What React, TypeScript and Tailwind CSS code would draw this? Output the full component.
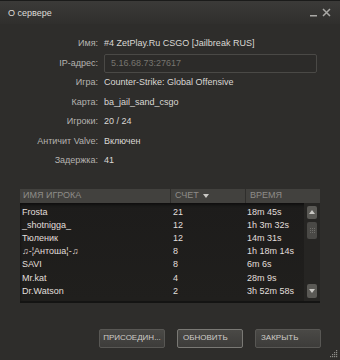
const INFO: { label: string; value: string; input?: boolean }[] = [
  { label: "Имя:", value: "#4 ZetPlay.Ru CSGO [Jailbreak RUS]" },
  { label: "IP-адрес:", value: "5.16.68.73:27617", input: true },
  { label: "Игра:", value: "Counter-Strike: Global Offensive" },
  { label: "Карта:", value: "ba_jail_sand_csgo" },
  { label: "Игроки:", value: "20 / 24" },
  { label: "Античит Valve:", value: "Включен" },
  { label: "Задержка:", value: "41" },
];

const PLAYERS: [string, string, string][] = [
  ["Frosta", "21", "18m 45s"],
  ["_shotnigga_", "12", "1h 3m 32s"],
  ["Тюленик", "12", "14m 31s"],
  ["♫-¦Антоша¦-♫", "8", "1h 18m 14s"],
  ["SAVI", "8", "6m 6s"],
  ["Mr.kat", "4", "28m 9s"],
  ["Dr.Watson", "2", "3h 52m 58s"],
];

function Arrow({ down }: { down?: boolean }) {
  return (
    <svg width="6" height="4" viewBox="0 0 6 4" aria-hidden="true">
      {down ? <polygon points="0,0 6,0 3,4" fill="#c9c8c4" /> : <polygon points="0,4 6,4 3,0" fill="#c9c8c4" />}
    </svg>
  );
}

export default function App() {
  return (
    <div
      className="w-[340px] h-[360px] flex flex-col bg-[#2e2d2b] border-t border-[#1b1b1a] text-[9px] leading-none"
      style={{ fontFamily: '"Liberation Sans", Arial, sans-serif' }}
    >
      {/* Title bar */}
      <div className="h-[23px] shrink-0 flex items-center justify-between pl-[8px] pr-[9px] bg-gradient-to-b from-[#3b3a38] to-[#302f2d]">
        <span className="text-[#dedcd8] mt-[1px]">О сервере</span>
        <div className="flex items-center gap-[5px]">
          <svg width="7" height="9" viewBox="0 0 7 9" aria-hidden="true">
            <rect x="0" y="7" width="7" height="1.5" fill="#a9a8a5" />
          </svg>
          <svg width="9" height="9" viewBox="0 0 9 9" aria-hidden="true">
            <path d="M1 1L8 8M8 1L1 8" stroke="#a9a8a5" strokeWidth="1.5" />
          </svg>
        </div>
      </div>

      {/* Info */}
      <div className="pt-[10px] flex flex-col">
        {INFO.map((row) => (
          <div key={row.label} className="h-[19.5px] flex items-center">
            <span className="w-[101px] shrink-0 text-right pr-[3px] text-[#b5b3b0]">{row.label}</span>
            {row.input ? (
              <div className="ml-[3px] w-[213px] h-[19px] flex items-center pl-[6px] border border-[#4a4946] rounded-[2px] bg-[#2c2b29] text-[#77756f]">
                {row.value}
              </div>
            ) : (
              <span className="ml-[3px] text-[#dad8d4]">{row.value}</span>
            )}
          </div>
        ))}
      </div>

      {/* Player table */}
      <div className="mt-[18px] mx-[20px] flex flex-col">
        <div className="h-[14px] flex items-center bg-[#42413e] text-[#8e8c88]">
          <div className="w-[151px] pl-[3px] border-r border-[#2f2e2c] h-full flex items-center">ИМЯ ИГРОКА</div>
          <div className="w-[75px] pl-[4px] border-r border-[#2f2e2c] h-full flex items-center gap-[4px]">
            СЧЕТ
            <Arrow down />
          </div>
          <div className="pl-[4px]">ВРЕМЯ</div>
        </div>
        <div className="h-[100px] flex bg-gradient-to-b from-[#1d1c1b] to-[#201f1d] border-b-2 border-[#141413] shadow-[inset_0_2px_3px_rgba(0,0,0,0.5)]">
          <div className="flex-1 pt-[3px] text-[#e1dfdb]">
            {PLAYERS.map(([name, score, time]) => (
              <div key={name} className="h-[13.2px] flex items-center">
                <span className="w-[151px] pl-[2px]">{name}</span>
                <span className="w-[76px] pl-[2px]">{score}</span>
                <span>{time}</span>
              </div>
            ))}
          </div>
          <div className="w-[16px] shrink-0 flex flex-col items-center py-[3px] bg-[#262523]">
            <div className="w-[10px] h-[13px] rounded-[2px] bg-[#5a5955] flex items-center justify-center">
              <Arrow />
            </div>
            <div className="w-[10px] h-[17px] mt-[3px] rounded-[2px] bg-[#4a4946] flex items-center justify-center">
              <svg width="5" height="5" viewBox="0 0 5 5" aria-hidden="true">
                {[0, 2, 4].map((x) =>
                  [0, 2, 4].map((y) => <rect key={`${x}-${y}`} x={x} y={y} width="1" height="1" fill="#6e6d69" />)
                )}
              </svg>
            </div>
            <div className="flex-1" />
            <div className="w-[10px] h-[14px] rounded-[2px] bg-[#5a5955] flex items-center justify-center">
              <Arrow down />
            </div>
          </div>
        </div>
      </div>

      {/* Buttons */}
      <div className="mt-[26px] flex justify-end gap-[12px] pr-[19px] text-[8px] text-[#cfcdc9]">
        <button className="w-[66px] h-[19px] rounded-[2px] border border-[#585754] bg-gradient-to-b from-[#4a4946] to-[#3d3c3a] flex items-center justify-center">
          ПРИСОЕДИН...
        </button>
        <button className="w-[66px] h-[19px] rounded-[2px] border border-[#7a7975] bg-gradient-to-b from-[#4a4946] to-[#3d3c3a] flex items-center pl-[5px]">
          ОБНОВИТЬ
        </button>
        <button className="w-[66px] h-[19px] rounded-[2px] border border-[#585754] bg-gradient-to-b from-[#4a4946] to-[#3d3c3a] flex items-center pl-[5px]">
          ЗАКРЫТЬ
        </button>
      </div>
      <div className="flex-1 flex justify-end items-end pr-[2px] pb-[2px]">
        <svg width="8" height="8" viewBox="0 0 8 8" aria-hidden="true">
          {[
            [6, 0], [4, 2], [6, 2], [2, 4], [4, 4], [6, 4], [0, 6], [2, 6], [4, 6], [6, 6],
          ].map(([x, y]) => (
            <rect key={`${x}-${y}`} x={x} y={y} width="1.2" height="1.2" fill="#8d8c88" />
          ))}
        </svg>
      </div>
    </div>
  );
}
